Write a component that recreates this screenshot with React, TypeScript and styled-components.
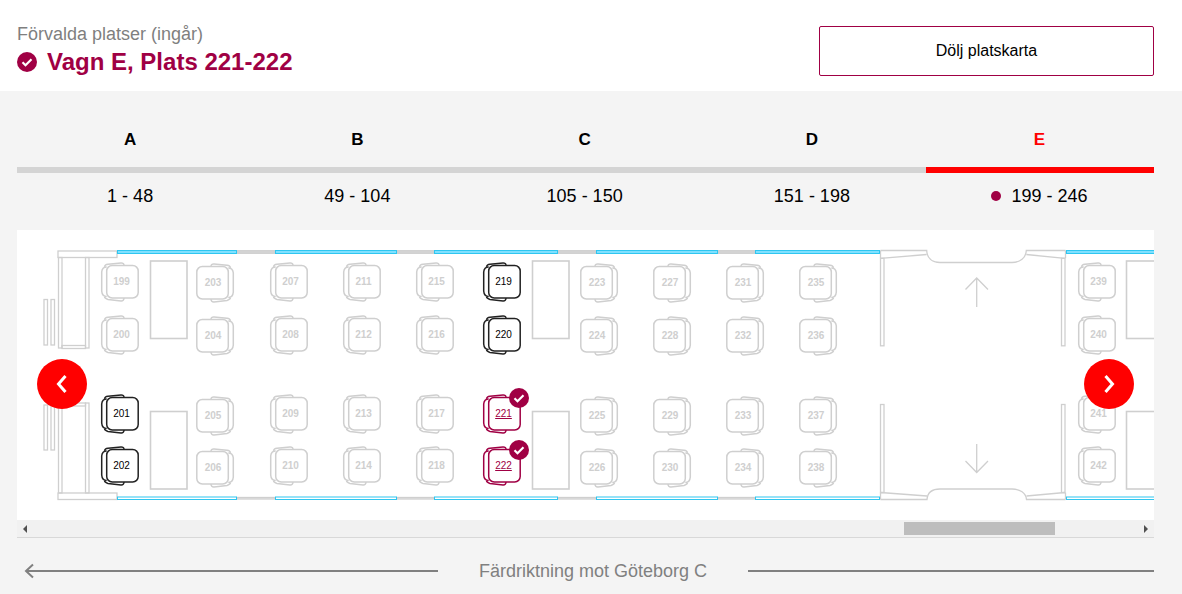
import React from "react";
import styled, { createGlobalStyle } from "styled-components";

const maroon = "#a00044";
const Global = createGlobalStyle`
  html, body { margin: 0; padding: 0; background: #f4f4f4; }
  body { font-family: "Liberation Sans", Arial, sans-serif; color: #000; }
  * { box-sizing: border-box; }
`;
const Page = styled.div`width: 1182px; height: 594px; overflow: hidden; background: #f4f4f4;`;
const Header = styled.header`
  height: 91px; background: #fff; padding: 26px 28px 0 17px;
  display: flex; justify-content: space-between; align-items: flex-start;
`;
const Summary = styled.div`display: flex; flex-direction: column; gap: 7px;`;
const Caption = styled.div`font-size: 18px; line-height: 17px; color: #7f7f7f;`;
const Selected = styled.div`
  display: flex; align-items: center; gap: 10px; color: ${maroon};
  font-size: 24px; line-height: 24px; font-weight: 700;
`;
const HideButton = styled.button`
  width: 335px; height: 50px; background: #fff; border: 1px solid ${maroon}; border-radius: 2px;
  font: 400 16px "Liberation Sans", Arial, sans-serif; color: #000; padding: 0;
`;
const Main = styled.main`padding: 0 28px 0 17px;`;
const Tabs = styled.div`display: grid; grid-template-columns: repeat(4, 227.25px) 1fr; height: 139px;`;
const Tab = styled.div`display: flex; flex-direction: column; align-items: stretch; text-align: center;`;
const TabLetter = styled.div<{ $active: boolean }>`
  height: 82px; padding: 40px 1px 0 0; font-size: 17px; line-height: 17px; font-weight: 700;
  border-bottom: 6px solid ${(p) => (p.$active ? "#ff0000" : "#d4d4d4")};
  color: ${(p) => (p.$active ? "#ff0000" : "#000")};
`;
const TabRange = styled.div`
  display: flex; align-items: center; justify-content: center; gap: 10px;
  padding: 13px 1px 0 0; font-size: 18px; line-height: 20px;
`;
const Dot = styled.span`width: 10px; height: 10px; border-radius: 50%; background: ${maroon};`;
const MapFrame = styled.section`position: relative; width: 1137px; height: 308px; border-bottom: 1px solid #d8d8d8;`;
const MapCanvas = styled.svg`display: block; width: 1137px; height: 290px; background: #fff;`;
const ScrollBar = styled.div`display: flex; align-items: center; height: 17px; background: #f1f1f1; padding: 0 5px;`;
const ScrollThumb = styled.div`width: 151px; height: 13px; margin-left: 876px; background: #bdbdbd;`;
const ScrollArrow = styled.svg`flex: none; width: 6px; height: 8px; fill: #505050;`;
const Spacer = styled.div`flex: 1;`;
const NavButton = styled.button<{ $side: "left" | "right" }>`
  position: absolute; top: 129px; ${(p) => p.$side}: 20px; width: 50px; height: 50px; padding: 0; border: 0;
  border-radius: 50%; background: #ff0000; display: flex; align-items: center; justify-content: center;
`;
const Direction = styled.div`display: flex; align-items: center; height: 66px; padding-left: 7px;`;
const DirectionLine = styled.div`flex: 1; height: 2px; background: #808080;`;
const DirectionArrow = styled.svg`flex: none; width: 11px; height: 16px; margin-right: -3px;`;
const DirectionText = styled.div`flex: none; width: 310px; text-align: center; font-size: 18px; color: #808080;`;
const SeatLabel = styled.text<{ $kind: string }>`
  font: ${(p) => (p.$kind === "free" ? 700 : 400)} 10px "Liberation Sans", Arial, sans-serif;
  fill: ${(p) => (p.$kind === "free" ? "#cfcfcf" : p.$kind === "mine" ? maroon : "#000")};
  text-anchor: middle;
  text-decoration: ${(p) => (p.$kind === "mine" ? "underline" : "none")};
`;

type Kind = "free" | "open" | "mine";
type SeatData = { n: number; x: number; y: number; flip?: boolean; kind?: Kind };

const tabs = [
  ["A", "1 - 48"], ["B", "49 - 104"], ["C", "105 - 150"], ["D", "151 - 198"], ["E", "199 - 246"],
];

const leftCols: [number, number][] = [[101, 199], [270, 207], [343, 211], [416, 215], [483, 219], [1078, 239]];
const rightCols: [number, number][] = [[196, 203], [580, 223], [653, 227], [726, 231], [799, 235]];
const special: Record<number, Kind> = { 201: "open", 202: "open", 219: "open", 220: "open", 221: "mine", 222: "mine" };
const seats: SeatData[] = [];
const ly = [262, 315, 394, 446];
const ry = [263, 316, 396, 448];
leftCols.forEach(([x, s]) => ly.forEach((y, i) => seats.push({ n: s + i, x, y, kind: special[s + i] })));
rightCols.forEach(([x, s]) => ry.forEach((y, i) => seats.push({ n: s + i, x, y, flip: true })));

const Seat = ({ n, x, y, flip, kind = "free" }: SeatData) => {
  const stroke = kind === "free" ? "#cfcfcf" : kind === "mine" ? maroon : "#222";
  const tf = flip ? `translate(${x + 38} ${y}) scale(-1 1)` : `translate(${x} ${y})`;
  return (
    <g>
      <g transform={tf} fill="none" stroke={stroke} strokeWidth="1.5">
        <rect x="5.7" y="3.5" width="31.5" height="32.5" rx="5.5" />
        <path d="M5.7 5C2.5 5 1 6.5.7 10V29C1 33 2.5 34.5 5.7 34.5" />
        <path d="M3.5 4.8C3.8 3 5 2.4 7 2.2L20 .9C22 .8 23 1.8 23 3.5" />
        <path d="M3.5 34.7C3.8 36.5 5 37 7 37.4L20 38.9C22 39 23 38 23 36" />
      </g>
      <SeatLabel $kind={kind} x={flip ? x + 17 : x + 20.5} y={y + 23}>{n}</SeatLabel>
      {kind === "mine" && (
        <g transform={`translate(${x + 36} ${y + 4})`}>
          <circle r="10" fill={maroon} />
          <path d="M-4.5 .2L-1.5 3.2L4.5-2.8" fill="none" stroke="#fff" strokeWidth="2.2" />
        </g>
      )}
    </g>
  );
};

const topWindows: [number, number][] = [[117, 237], [275, 397], [434, 558], [596, 718], [755, 880], [1066, 1160]];
const gaps: [number, number][] = [[237, 275], [397, 434], [558, 596], [718, 755]];

const CarPlan = () => (
  <MapCanvas viewBox="17 230 1137 290">
    <g fill="none" stroke="#cfcfcf" strokeWidth="1.3">
      <rect x="58" y="251" width="59" height="6.5" />
      <rect x="58.5" y="257.5" width="3.5" height="90.5" />
      <rect x="85.5" y="257.5" width="3.5" height="90.5" />
      <rect x="62" y="345.5" width="23.5" height="3" />
      <rect x="44" y="299.5" width="3.5" height="45.5" />
      <rect x="51" y="299.5" width="3.5" height="45.5" />
      <rect x="58" y="493" width="59" height="6.5" />
      <rect x="58.5" y="403" width="3.5" height="90" />
      <rect x="85.5" y="403" width="3.5" height="90" />
      <rect x="62" y="403" width="23.5" height="3" />
      <rect x="44" y="405" width="3.5" height="45" />
      <rect x="51" y="405" width="3.5" height="45" />
      {[150.5, 532.5, 1126.5].map((x) => (
        <g key={x} strokeWidth="1.6">
          <rect x={x} y="261" width="36.5" height="77.5" />
          <rect x={x} y="411.5" width="36.5" height="77.5" />
        </g>
      ))}
      {gaps.map(([a, b]) => (
        <g key={a}>
          <rect x={a} y="250.7" width={b - a} height="2.6" fill="#d6d6d6" />
          <rect x={a} y="497.5" width={b - a} height="1.5" />
        </g>
      ))}
      <path d="M880.5 250.5H926.7C927 258 932 262.5 940 262.5H1012C1020 262.5 1026 258 1026.3 250.5H1065.5" />
      <path d="M880.5 258.3L926.7 254.5M1026.3 254.5L1065 258.3M880.5 250.5V258.3M1065.5 250.5V258.3" />
      <rect x="880.5" y="258.3" width="3.5" height="87.5" />
      <rect x="1061.5" y="258.3" width="3.5" height="87.5" />
      <path d="M880.5 499.5H927C927.5 493 932 489 940 489H1012C1020 489 1026 493 1026.5 499.5H1065.5" />
      <path d="M880.5 492.5L927 496M1026.5 496L1065 492.5M880.5 492.5V499.5M1065.5 492.5V499.5" />
      <rect x="880.5" y="404.5" width="3.5" height="88" />
      <rect x="1061.5" y="404.5" width="3.5" height="88" />
      <path d="M976.7 307V278M965.5 289.5L976.7 278L988 289.5" />
      <path d="M976.7 444V472.5M965.5 461L976.7 472.5L988 461" />
    </g>
    {topWindows.map(([a, b]) => (
      <g key={a} stroke="#2fc6f0" strokeWidth="1">
        <rect x={a + 0.5} y="250.5" width={b - a - 1} height="3" fill="#7fe0ff" />
        <rect x={a + 0.5} y="497" width={b - a - 1} height="2.5" fill="#fff" />
      </g>
    ))}
    {seats.map((s) => <Seat key={s.n} {...s} />)}
  </MapCanvas>
);

const Chevron = ({ d }: { d: string }) => (
  <svg width="12" height="20" viewBox="0 0 12 20" fill="none" stroke="#fff" strokeWidth="3"><path d={d} /></svg>
);

export default function App() {
  return (
    <Page>
      <Global />
      <Header>
        <Summary>
          <Caption>Förvalda platser (ingår)</Caption>
          <Selected>
            <svg width="20" height="20" viewBox="0 0 20 20">
              <circle cx="10" cy="10" r="10" fill={maroon} />
              <path d="M5.5 10.2L8.5 13.2L14.5 7.2" fill="none" stroke="#fff" strokeWidth="2.2" />
            </svg>
            Vagn E, Plats 221-222
          </Selected>
        </Summary>
        <HideButton>Dölj platskarta</HideButton>
      </Header>
      <Main>
        <Tabs>
          {tabs.map(([l, r]) => (
            <Tab key={l}>
              <TabLetter $active={l === "E"}>{l}</TabLetter>
              <TabRange>{l === "E" && <Dot />}{r}</TabRange>
            </Tab>
          ))}
        </Tabs>
        <MapFrame>
          <CarPlan />
          <ScrollBar>
            <ScrollArrow viewBox="0 0 6 8"><path d="M5 0V8L1 4Z" /></ScrollArrow>
            <ScrollThumb />
            <Spacer />
            <ScrollArrow viewBox="0 0 6 8"><path d="M1 0V8L5 4Z" /></ScrollArrow>
          </ScrollBar>
          <NavButton $side="left" aria-label="Föregående"><Chevron d="M9.5 2L2.5 10L9.5 18" /></NavButton>
          <NavButton $side="right" aria-label="Nästa"><Chevron d="M2.5 2L9.5 10L2.5 18" /></NavButton>
        </MapFrame>
        <Direction>
          <DirectionArrow viewBox="0 0 11 16" fill="none" stroke="#808080" strokeWidth="2"><path d="M9 1.5L2 8L9 14.5M2 8H11" /></DirectionArrow>
          <DirectionLine />
          <DirectionText>Färdriktning mot Göteborg C</DirectionText>
          <DirectionLine />
        </Direction>
      </Main>
    </Page>
  );
}
